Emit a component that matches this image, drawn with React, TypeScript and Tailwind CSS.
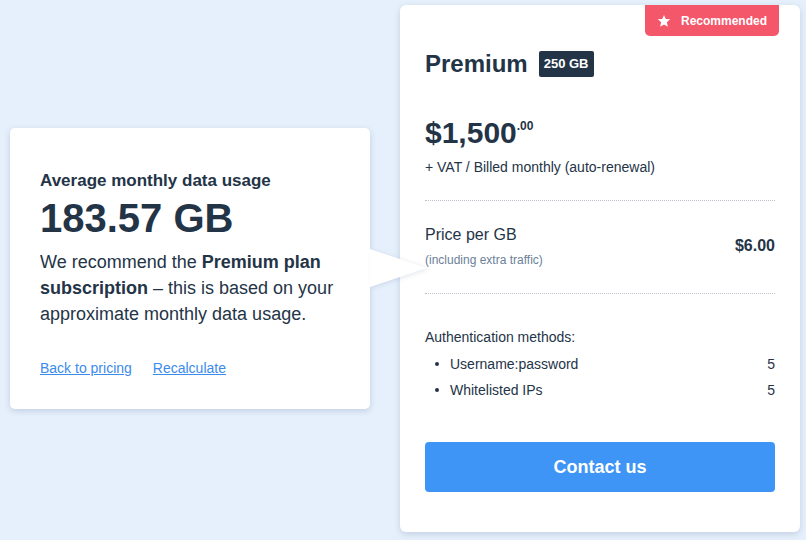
import React from "react";

const font = { fontFamily: '"Liberation Sans", Arial, Helvetica, sans-serif' };

function StarIcon() {
  return (
    <svg width="14" height="14" viewBox="0 0 24 24" fill="white" aria-hidden="true">
      <path d="M12 1.5l3.1 7 7.6.7-5.8 5.1 1.7 7.5L12 17.9l-6.6 3.9 1.7-7.5L1.3 9.2l7.6-.7z" />
    </svg>
  );
}

function UsageCard() {
  return (
    <div className="relative z-10 mt-[128px] ml-[10px] h-[281px] w-[360px] shrink-0 rounded-[5px] bg-white px-[30px] pt-[41px] shadow-[0_2px_6px_rgba(30,60,110,0.18)]">
      <h3 className="text-[17px] font-bold leading-6 text-[#243447]">Average monthly data usage</h3>
      <p className="mt-[5px] text-[40px] font-bold leading-[40px] text-[#243447]">183.57 GB</p>
      <p className="mt-[11px] text-[18px] leading-[26px] text-[#243447]">
        We recommend the <span className="font-bold">Premium plan subscription</span> – this is based on your
        approximate monthly data usage.
      </p>
      <div className="mt-[31px] flex gap-[21px] text-[14px] leading-5 text-[#3b8beb]">
        <a href="#" className="underline">Back to pricing</a>
        <a href="#" className="underline">Recalculate</a>
      </div>
      {/* speech-bubble pointer */}
      <div className="absolute top-[121px] left-full h-0 w-0 border-y-[19.5px] border-l-[57px] border-y-transparent border-l-white drop-shadow-[2px_1px_2px_rgba(30,60,110,0.12)]" />
    </div>
  );
}

function PlanCard() {
  return (
    <div className="relative mt-[5px] ml-[30px] h-[527px] w-[400px] shrink-0 rounded-[6px] bg-white px-[25px] pt-[45px] shadow-[0_2px_6px_rgba(30,60,110,0.18)]">
      <div className="absolute top-0 right-[21px] flex h-[31px] w-[134px] items-center gap-[10px] rounded-b-[5px] bg-[#f4566a] pl-[12px] text-[12px] font-bold text-white">
        <StarIcon />
        <span>Recommended</span>
      </div>

      <div className="flex items-center gap-[11px]">
        <h2 className="text-[24px] font-bold leading-7 text-[#243447]">Premium</h2>
        <span className="flex h-[26px] items-center rounded-[2px] bg-[#243447] px-[5px] text-[13px] font-bold text-white">250 GB</span>
      </div>

      <div className="mt-[37px] flex items-start text-[#243447]">
        <span className="text-[30px] font-bold leading-9">$1,500</span>
        <span className="mt-[3px] text-[12px] font-bold leading-4">.00</span>
      </div>
      <p className="mt-[6px] text-[14px] leading-5 text-[#243447]">+ VAT / Billed monthly (auto-renewal)</p>

      <div className="mt-[23px] flex items-center justify-between border-y border-dotted border-[#b9c0ca] pt-[22px] pb-[25px]">
        <div>
          <p className="text-[16px] leading-6 text-[#243447]">Price per GB</p>
          <p className="mt-[5px] text-[12px] leading-4 text-[#6b8199]">(including extra traffic)</p>
        </div>
        <span className="text-[16px] font-bold leading-6 text-[#243447]">$6.00</span>
      </div>

      <p className="mt-[33px] text-[14px] leading-5 text-[#243447]">Authentication methods:</p>
      <ul className="mt-[7px] flex flex-col gap-[6px] text-[14px] leading-5 text-[#243447]">
        <li className="flex items-center justify-between pl-[10px]">
          <span className="flex items-center gap-[11px]">
            <span className="h-[4px] w-[4px] rounded-full bg-[#243447]" />
            Username:password
          </span>
          <span>5</span>
        </li>
        <li className="flex items-center justify-between pl-[10px]">
          <span className="flex items-center gap-[11px]">
            <span className="h-[4px] w-[4px] rounded-full bg-[#243447]" />
            Whitelisted IPs
          </span>
          <span>5</span>
        </li>
      </ul>

      <button className="mt-[42px] flex h-[50px] w-full items-center justify-center rounded-[4px] bg-[#3e95f5] text-[18px] font-bold text-white">
        Contact us
      </button>
    </div>
  );
}

export default function App() {
  return (
    <div style={font} className="flex h-[540px] w-[806px] items-start overflow-hidden bg-[#e6f0fc]">
      <UsageCard />
      <PlanCard />
    </div>
  );
}
